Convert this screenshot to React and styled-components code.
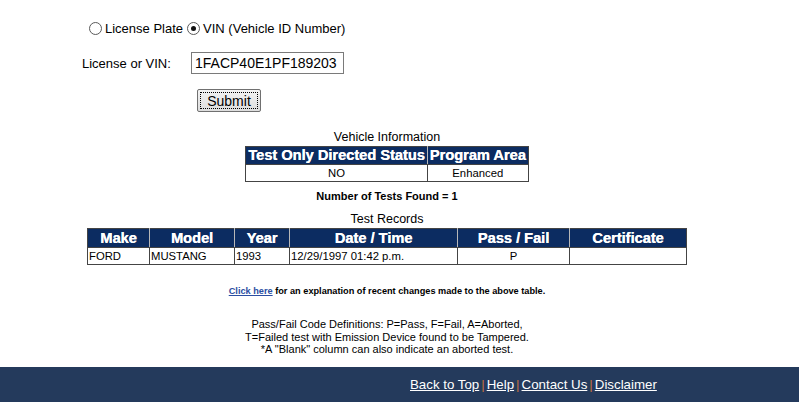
import React from 'react';
import styled, { createGlobalStyle, css } from 'styled-components';

const GlobalStyle = createGlobalStyle`
  html, body {
    margin: 0;
    padding: 0;
    background: #fff;
  }

  body {
    font-family: "Liberation Sans", Arial, sans-serif;
    color: #000;
  }
`;

const Page = styled.div`
  width: 799px;
  min-height: 402px;
  display: flex;
  flex-direction: column;
`;

const Main = styled.main`
  width: 774px;
`;

const SearchForm = styled.form`
  padding: 18px 0 0 82px;
  font-size: 13px;
`;

const RadioRow = styled.div`
  display: flex;
  align-items: center;
  height: 20px;
  padding-left: 7px;
`;

const RadioLabel = styled.label`
  display: flex;
  align-items: center;
  gap: 3px;
  margin-right: 4px;
  font-size: 13px;
`;

const RadioDot = styled.span`
  width: 11px;
  height: 11px;
  border: 1px solid #5a5a5a;
  border-radius: 50%;
  background: #fff;
  position: relative;
  box-sizing: content-box;

  ${({ $checked }) =>
    $checked &&
    css`
      &::after {
        content: '';
        position: absolute;
        left: 3px;
        top: 3px;
        width: 5px;
        height: 5px;
        border-radius: 50%;
        background: #111;
      }
    `}
`;

const FieldRow = styled.div`
  display: flex;
  align-items: center;
  margin-top: 14px;
`;

const FieldLabel = styled.label`
  width: 109px;
  font-size: 13px;
`;

const TextInput = styled.div`
  width: 153px;
  height: 22px;
  box-sizing: border-box;
  border: 1px solid #7a7a7a;
  padding: 0 3px;
  font-size: 14px;
  line-height: 20px;
  white-space: nowrap;
`;

const SubmitRow = styled.div`
  margin-top: 15px;
  padding-left: 115px;
`;

const SubmitButton = styled.button`
  width: 64px;
  height: 23px;
  box-sizing: border-box;
  border: 1px solid #707070;
  border-radius: 2px;
  background: linear-gradient(#f3f3f3, #dddddd);
  outline: 1px dotted #000;
  outline-offset: -4px;
  font-family: "Liberation Sans", Arial, sans-serif;
  font-size: 14px;
  color: #000;
  padding: 0;
`;

const Section = styled.section`
  display: flex;
  flex-direction: column;
  align-items: center;
`;

const Caption = styled.div`
  font-size: 12.5px;
  line-height: ${({ $lh }) => $lh}px;
  margin-top: ${({ $top }) => $top}px;
  text-align: center;
`;

const Table = styled.table`
  border-collapse: collapse;
  border: 1px solid #444;

  ${({ $width }) =>
    $width &&
    css`
      width: ${$width}px;
      table-layout: fixed;
    `}
`;

const Th = styled.th`
  background: #0c2c61;
  color: #fff;
  font-size: 14.6px;
  font-weight: bold;
  height: ${({ $h }) => $h}px;
  line-height: 15px;
  padding: 0 2px;
  white-space: nowrap;
  text-align: center;
  border: 1px solid #444;
  border-left-color: #b8b8b8;
  border-right-color: #b8b8b8;
  text-shadow: 0.3px 0 0 #fff;

  &:first-child {
    border-left-color: #444;
  }

  &:last-child {
    border-right-color: #444;
  }
`;

const Td = styled.td`
  font-size: 11.3px;
  height: ${({ $h }) => $h}px;
  line-height: 12px;
  padding: 0 1px;
  border: 1px solid #444;
  white-space: nowrap;
  text-align: ${({ $align }) => $align || 'left'};
`;

const Count = styled.div`
  margin-top: 8px;
  font-size: 11px;
  font-weight: bold;
  line-height: 12px;
`;

const Note = styled.p`
  margin: 20px 0 0;
  font-size: 9.2px;
  font-weight: bold;
  line-height: 12px;
  text-align: center;
`;

const NoteLink = styled.a`
  color: #2b4ea2;
  text-decoration: underline;
`;

const Legend = styled.p`
  margin: 21px 0 0;
  font-size: 11px;
  line-height: 12.5px;
  text-align: center;
`;

const Footer = styled.footer`
  margin-top: 11.5px;
  flex: 1;
  min-height: 35px;
  background: #243a5c;
  display: flex;
  align-items: center;
  padding-left: 410px;
  font-size: 13.3px;
`;

const FooterLink = styled.a`
  color: #fff;
  text-decoration: underline;
`;

const Sep = styled.span`
  color: #c0703f;
  margin: 0 2px;
`;

const records = [
  { make: 'FORD', model: 'MUSTANG', year: '1993', date: '12/29/1997 01:42 p.m.', result: 'P', cert: '' },
];

const columns = [
  { title: 'Make', width: 62 },
  { title: 'Model', width: 85 },
  { title: 'Year', width: 55 },
  { title: 'Date / Time', width: 168 },
  { title: 'Pass / Fail', width: 112 },
  { title: 'Certificate', width: 117 },
];

const footerLinks = ['Back to Top', 'Help', 'Contact Us', 'Disclaimer'];

const App = () => (
  <>
    <GlobalStyle />
    <Page>
      <Main>
        <SearchForm onSubmit={(e) => e.preventDefault()}>
          <RadioRow>
            <RadioLabel>
              <RadioDot />
              License Plate
            </RadioLabel>
            <RadioLabel>
              <RadioDot $checked />
              VIN (Vehicle ID Number)
            </RadioLabel>
          </RadioRow>
          <FieldRow>
            <FieldLabel>License or VIN:</FieldLabel>
            <TextInput>1FACP40E1PF189203</TextInput>
          </FieldRow>
          <SubmitRow>
            <SubmitButton type="submit">Submit</SubmitButton>
          </SubmitRow>
        </SearchForm>

        <Section>
          <Caption $top={17} $lh={17}>Vehicle Information</Caption>
          <Table>
            <thead>
              <tr>
                <Th $h={17}>Test Only Directed Status</Th>
                <Th $h={17}>Program Area</Th>
              </tr>
            </thead>
            <tbody>
              <tr>
                <Td $h={16} $align="center">NO</Td>
                <Td $h={16} $align="center">Enhanced</Td>
              </tr>
            </tbody>
          </Table>

          <Count>Number of Tests Found = 1</Count>

          <Caption $top={8} $lh={18}>Test Records</Caption>
          <Table $width={600}>
            <colgroup>
              {columns.map((c) => (
                <col key={c.title} style={{ width: c.width }} />
              ))}
            </colgroup>
            <thead>
              <tr>
                {columns.map((c) => (
                  <Th key={c.title} $h={18}>{c.title}</Th>
                ))}
              </tr>
            </thead>
            <tbody>
              {records.map((r) => (
                <tr key={r.date}>
                  <Td $h={16}>{r.make}</Td>
                  <Td $h={16}>{r.model}</Td>
                  <Td $h={16}>{r.year}</Td>
                  <Td $h={16}>{r.date}</Td>
                  <Td $h={16} $align="center">{r.result}</Td>
                  <Td $h={16}>{r.cert}</Td>
                </tr>
              ))}
            </tbody>
          </Table>

          <Note>
            <NoteLink href="#">Click here</NoteLink> for an explanation of recent changes made to the above table.
          </Note>

          <Legend>
            Pass/Fail Code Definitions: P=Pass, F=Fail, A=Aborted,
            <br />
            T=Failed test with Emission Device found to be Tampered.
            <br />
            *A "Blank" column can also indicate an aborted test.
          </Legend>
        </Section>
      </Main>

      <Footer>
        {footerLinks.map((l, i) => (
          <React.Fragment key={l}>
            {i > 0 && <Sep>|</Sep>}
            <FooterLink href="#">{l}</FooterLink>
          </React.Fragment>
        ))}
      </Footer>
    </Page>
  </>
);

export default App;
